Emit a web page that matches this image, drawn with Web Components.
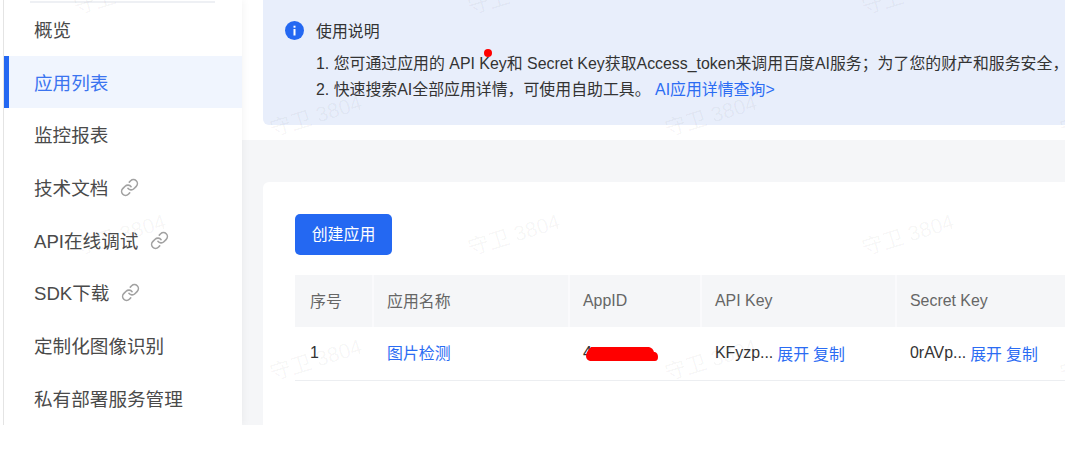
<!DOCTYPE html>
<html lang="zh">
<head>
<meta charset="utf-8">
<title>应用列表</title>
<style>
  html, body { margin: 0; background: #fff; }
  body { font-family: "Liberation Sans", "Noto Sans CJK SC", sans-serif; color: #333; overflow: hidden; }
</style>
</head>
<body>
<app-shell>
  <side-nav slot="nav">
    <nav-item>概览</nav-item>
    <nav-item active>应用列表</nav-item>
    <nav-item>监控报表</nav-item>
    <nav-item external>技术文档</nav-item>
    <nav-item external>API在线调试</nav-item>
    <nav-item external>SDK下载</nav-item>
    <nav-item>定制化图像识别</nav-item>
    <nav-item>私有部署服务管理</nav-item>
  </side-nav>
  <info-alert title-text="使用说明">
    <div>1. 您可通过应用的 API Key和 Secret Key获取Access_token来调用百度AI服务；为了您的财产和服务安全，</div>
    <div>2. 快速搜索AI全部应用详情，可使用自助工具。 <a style="color:#2b6cf3;text-decoration:none">AI应用详情查询&gt;</a></div>
  </info-alert>
  <app-card>
    <blue-button>创建应用</blue-button>
    <app-table></app-table>
  </app-card>
</app-shell>
<water-mark></water-mark>

<script>
// small helper, every component is just a shadow root + markup
class Base extends HTMLElement {
    constructor(html) {
        super()
        this.attachShadow({ mode: 'open' }).innerHTML = html
    }
}

customElements.define('app-shell', class extends Base {
    constructor() {
        super(/*html*/`
        <style>
            :host { display: flex; width: 1065px; height: 425px; overflow: hidden; background: #fff; }
            main { flex: 1; min-width: 0; padding-left: 21px; display: flex; flex-direction: column; gap: 57px;
                   background: linear-gradient(#fff 140px, #f5f6f8 140px); }
        </style>
        <slot name="nav"></slot>
        <main><slot></slot></main>`)
    }
})

customElements.define('side-nav', class extends Base {
    constructor() {
        super(/*html*/`
        <style>
            :host { display: block; width: 242px; flex: none; box-sizing: border-box; z-index: 1;
                    background: #fff; border-left: 4px solid #fff; position: relative; box-shadow: 1px 0 8px rgba(0, 0, 0, .05); }
            .edge { position: absolute; left: -1px; top: 0; bottom: 0; width: 1px; background: #e4e4e4; }
            .rule { height: 2px; margin: 1px 27px 0 26px; background: #eef0f4; }
            .list { display: flex; flex-direction: column; }
        </style>
        <div class="edge"></div>
        <div class="rule"></div>
        <div class="list"><slot></slot></div>`)
    }
})

const LINK_ICON = `<svg viewBox="0 0 24 24" width="19" height="19" fill="none" stroke="#a2a2a2" stroke-width="2" stroke-linecap="round" stroke-linejoin="round"><path d="M10 13a5 5 0 0 0 7.54.54l3-3a5 5 0 0 0-7.07-7.07l-1.72 1.71"/><path d="M14 11a5 5 0 0 0-7.54-.54l-3 3a5 5 0 0 0 7.07 7.07l1.71-1.71"/></svg>`

customElements.define('nav-item', class extends Base {
    constructor() {
        super(/*html*/`
        <style>
            :host { display: flex; align-items: center; gap: 12px; height: 52.7px; box-sizing: border-box;
                    padding: 0 0 2px 30px; font-size: 18.6px; color: #4a4a4a; position: relative; }
            :host([active]) { background: #f0f5fe; color: #3b74f0; }
            :host([active])::before { content: ""; position: absolute; left: 0; top: 0; bottom: 0; width: 5px; background: #2468f2; }
            svg { flex: none; display: block; }
            .ic { display: none; margin-top: 2px; }
            :host([external]) .ic { display: block; }
        </style>
        <slot></slot><span class="ic">${LINK_ICON}</span>`)
    }
})

customElements.define('info-alert', class extends Base {
    constructor() {
        super(/*html*/`
        <style>
            :host { display: block; height: 125px; box-sizing: border-box; padding: 17px 0 0 22px; background: #e8eefb;
                    border-bottom-left-radius: 6px; font-size: 15.9px; color: #333; position: relative; }
            .head { display: flex; align-items: center; gap: 12px; height: 26px; }
            .body { margin: 8px 0 0 31px; line-height: 26px; white-space: nowrap; }
            svg { flex: none; display: block; margin-top: 1px; }
            .dot { position: absolute; left: 221px; top: 49px; width: 8px; height: 8px; border-radius: 50%; background: #f00; }
        </style>
        <div class="head">
            <svg width="19" height="19" viewBox="0 0 19 19"><circle cx="9.5" cy="9.5" r="9.5" fill="#2468f2"/><rect x="8.5" y="8" width="2" height="6.5" fill="#fff"/><rect x="8.5" y="4.7" width="2" height="2" fill="#fff"/></svg>
            <span id="t"></span>
        </div>
        <div class="body"><slot></slot></div>
        <div class="dot"></div>`)
    }
    connectedCallback() {
        this.shadowRoot.getElementById('t').textContent = this.getAttribute('title-text')
    }
})

customElements.define('app-card', class extends Base {
    constructor() {
        super(/*html*/`
        <style>
            :host { display: block; flex: 1; background: #fff; border-radius: 6px 0 0 0; padding: 32px 0 0 32px; }
        </style>
        <slot></slot>`)
    }
})

customElements.define('blue-button', class extends Base {
    constructor() {
        super(/*html*/`
        <style>
            :host { display: flex; align-items: center; justify-content: center; width: 97px; height: 41px; border-radius: 5px;
                    box-sizing: border-box; padding-bottom: 3px; background: #2468f2; color: #fff; font-size: 15.9px; margin-bottom: 20px; }
        </style>
        <slot></slot>`)
    }
})

customElements.define('app-table', class extends Base {
    constructor() {
        super(/*html*/`
        <style>
            :host { display: grid; grid-template-columns: 77px 196px 132px 195px 1fr; font-size: 15.9px; }
            .th, .td { display: flex; align-items: center; box-sizing: border-box; padding-left: 15px; white-space: pre; position: relative; }
            .th { height: 52px; padding-bottom: 1px; background: #f5f6f8; color: #666; }
            .th.cjk { padding-bottom: 2px; }
            .th + .th::before { content: ""; position: absolute; left: 0; top: 0; bottom: 0; width: 2px; background: #fafafc; }
            .th:first-child { border-top-left-radius: 4px; }
            .td { height: 54px; padding-bottom: 1px; border-bottom: 1px solid #eceef1; color: #333; }
            .td.cjk { padding-bottom: 2px; }
            a { color: #2b6cf3; text-decoration: none; }
            .ops a { margin-left: 4px; }
            .mask { position: absolute; left: 18px; top: 20px; width: 72px; height: 14px; }
        </style>
        <div class="th cjk">序号</div>
        <div class="th cjk">应用名称</div>
        <div class="th">AppID</div>
        <div class="th">API Key</div>
        <div class="th">Secret Key</div>
        <div class="td">1</div>
        <div class="td cjk"><a>图片检测</a></div>
        <div class="td">4<svg class="mask" viewBox="0 0 72 14"><path d="M5 0h58q4 1 5 5h1q3 1 3 5t-3 4H4q-4-1-4-5t5-9z" fill="#f00"/></svg></div>
        <div class="td ops">KFyzp...<a>展开</a><a>复制</a></div>
        <div class="td ops">0rAVp...<a>展开</a><a>复制</a></div>`)
    }
})

// page watermark, staggered rows of faint rotated text
customElements.define('water-mark', class extends Base {
    constructor() {
        const spots = [[120, -6], [514, -6], [908, -6], [316, 116], [711, 116], [1106, 116],
            [120, 235], [514, 235], [908, 235], [316, 360], [711, 360], [1106, 360]]
        super(/*html*/`
        <style>
            :host { position: absolute; left: 0; top: 0; width: 1065px; height: 425px; overflow: hidden; pointer-events: none; z-index: 2; }
            span { position: absolute; transform: translate(-50%, -50%) rotate(-17deg); font-size: 21px; line-height: 26px;
                   color: rgba(0, 0, 0, .045); white-space: nowrap; }
        </style>
        ${spots.map(([x, y]) => `<span style="left:${x}px;top:${y}px">守卫 3804</span>`).join('')}`)
    }
})
</script>
</body>
</html>
